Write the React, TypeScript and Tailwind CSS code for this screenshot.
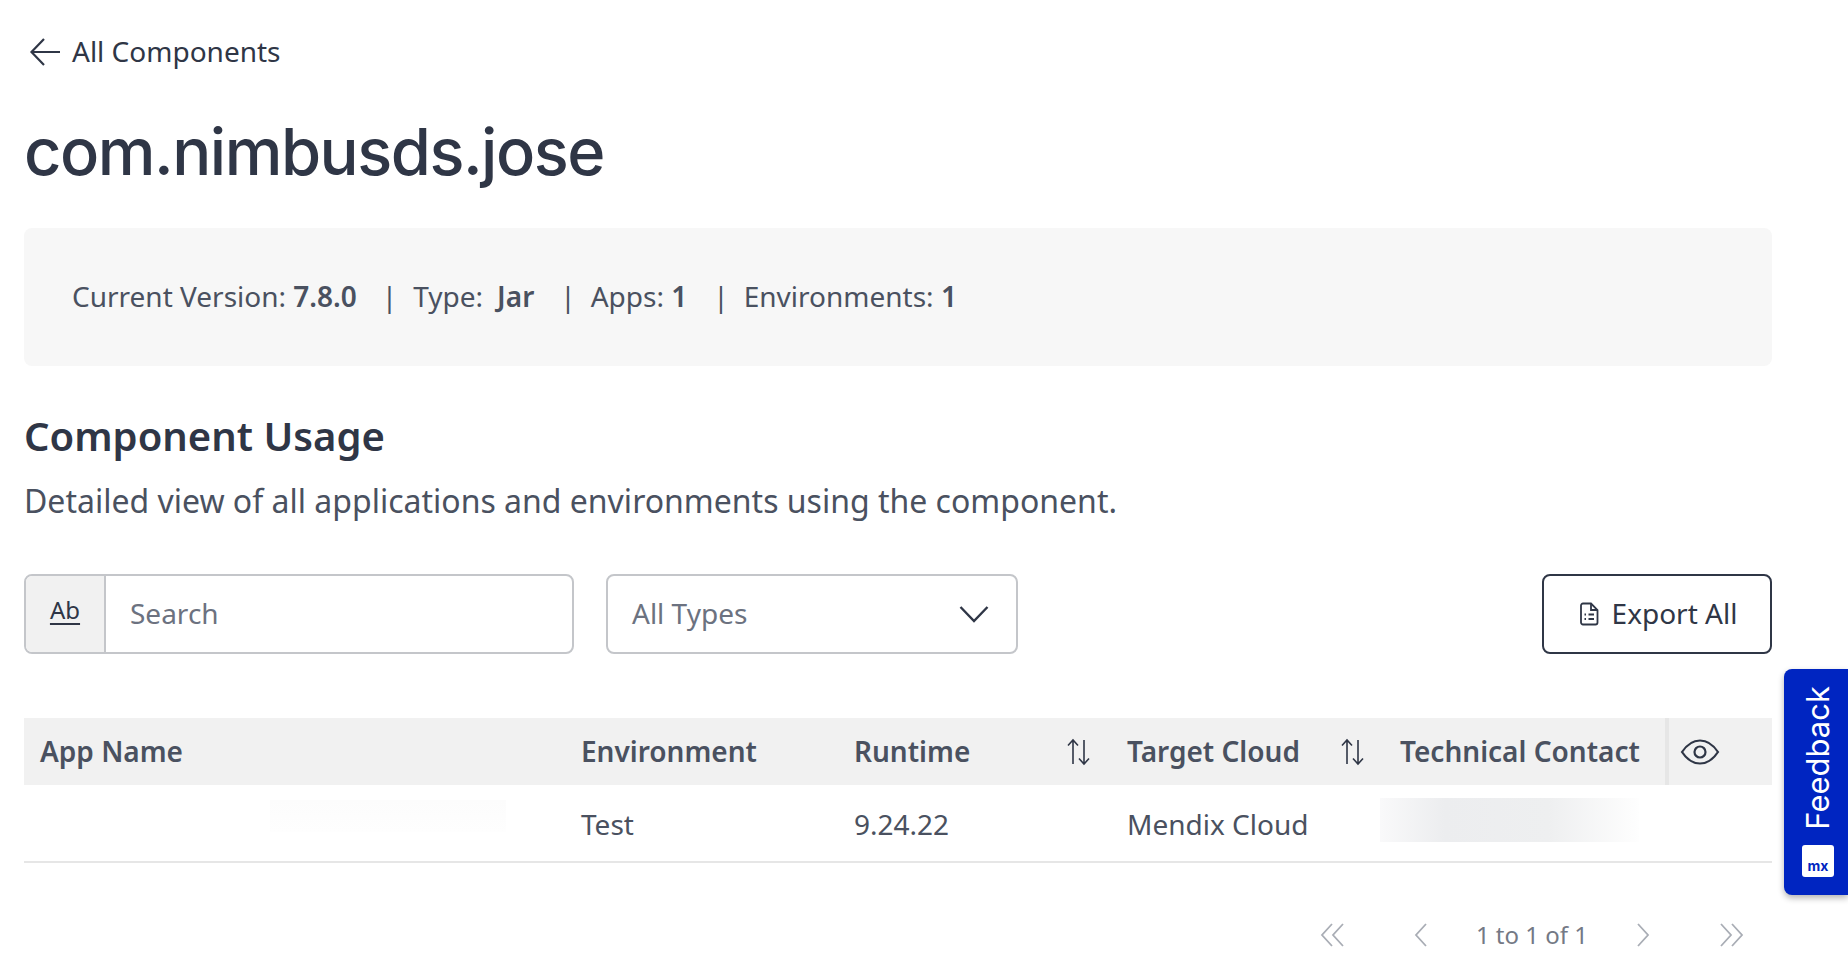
import React from "react";

const noto = { fontFamily: '"Noto Sans", sans-serif' };

function Sort() {
  return (
    <svg width="27" height="28" viewBox="0 0 27 28" fill="none" stroke="#2f3646" strokeWidth="1.600" className="shrink-0">
      <path d="M8 26V2M3 7.500L8 2l5 5.500" />
      <path d="M19 2v24M14 20.500L19 26l5-5.500" />
    </svg>
  );
}

function Pager({ d }: { d: string }) {
  return (
    <svg width="28" height="28" viewBox="0 0 28 28" fill="none" stroke="#a9adb5" strokeWidth="1.800" className="shrink-0">
      <path d={d} />
    </svg>
  );
}

export default function App() {
  return (
    <div className="relative h-[970px] w-[1848px] overflow-hidden bg-white px-6 text-[#4a5160]" style={noto}>
      <div className="flex h-[104px] items-center gap-[11px] pl-[5px] text-[#2f3646]">
        <svg width="32" height="32" viewBox="0 0 32 32" fill="none" stroke="#2f3646" strokeWidth="2.200">
          <path d="M31 16H3M15 3L2.500 16 15 29" />
        </svg>
        <span className="pb-[2px] text-[28px] leading-8">All Components</span>
      </div>

      <h1 className="h-[124px] pt-[12px] text-[65px] leading-[72px] tracking-[-1.5px] text-[#2f3646]" style={{ fontFamily: "Inter, sans-serif", fontWeight: 500 }}>
        com.nimbusds.jose
      </h1>

      <div className="flex h-[138px] w-[1748px] items-center rounded-lg bg-[#f7f7f7] pb-[3px] pl-12 text-[28px]">
        <span>Current Version: <b className="font-semibold">7.8.0</b></span>
        <span className="ml-[25px]">|</span>
        <span className="ml-[16px]">Type:</span>
        <b className="ml-[14px] font-semibold">Jar</b>
        <span className="ml-[26px]">|</span>
        <span className="ml-[15px]">Apps: <b className="font-semibold">1</b></span>
        <span className="ml-[26px]">|</span>
        <span className="ml-[15px]">Environments: <b className="font-semibold">1</b></span>
      </div>

      <h2 className="mt-[48px] h-[44px] text-[40px] leading-[44px] font-semibold text-[#2f3646]">Component Usage</h2>
      <p className="mt-[21px] h-[44px] text-[32px] leading-[44px]">Detailed view of all applications and environments using the component.</p>

      <div className="mt-[51px] flex h-[80px] w-[1748px] items-stretch">
        <div className="flex w-[550px] rounded-lg border-2 border-[#c4c6ca]">
          <div className="flex w-[80px] shrink-0 items-center justify-center rounded-l-md border-r-2 border-[#c4c6ca] bg-[#f1f1f1] pb-2 text-[24px] text-[#2f3646]">
            <span className="underline decoration-2 underline-offset-[4px]">Ab</span>
          </div>
          <div className="flex items-center pb-[2px] pl-[24px] text-[28px] text-[#6c7280]">Search</div>
        </div>
        <div className="ml-[32px] flex w-[412px] items-center justify-between rounded-lg border-2 border-[#c4c6ca] pl-[24px] pr-[27px] text-[28px] text-[#6c7280]">
          <span className="pb-[2px]">All Types</span>
          <svg width="30" height="18" viewBox="0 0 30 18" fill="none" stroke="#2f3646" strokeWidth="2.400">
            <path d="M1.500 2L15 16 28.500 2" />
          </svg>
        </div>
        <div className="ml-auto flex w-[230px] items-center justify-center gap-[13px] rounded-lg border-2 border-[#2f3646] pl-[2px] text-[28px] text-[#2f3646]">
          <svg width="20" height="24" viewBox="0 0 20 24" fill="none" stroke="#2f3646" strokeWidth="1.800">
            <path d="M2 3.500a2 2 0 0 1 2-2h8L18.500 8v12.500a2 2 0 0 1-2 2H4a2 2 0 0 1-2-2z" />
            <path d="M12 1.500V8h6.500M5.500 12.500h1.500M9.500 12.500h5.500M5.500 17h1.500M9.500 17h5.500" />
          </svg>
          <span className="pb-[2px]">Export All</span>
        </div>
      </div>

      <div className="mt-[64px] w-[1748px]">
        <div className="flex h-[67px] items-center bg-[#f1f1f1] text-[28px] font-semibold">
          <div className="w-[557px] shrink-0 pb-[2px] pl-4">App Name</div>
          <div className="w-[273px] shrink-0 pb-[2px]">Environment</div>
          <div className="flex w-[273px] shrink-0 items-center justify-between pr-[35px]">
            <span className="pb-[2px]">Runtime</span>
            <Sort />
          </div>
          <div className="flex w-[273px] shrink-0 items-center justify-between pr-[34px]">
            <span className="pb-[2px]">Target Cloud</span>
            <Sort />
          </div>
          <div className="flex h-full w-[269px] shrink-0 items-center border-r-[4px] border-[#e6e6e6] pb-[2px]">Technical Contact</div>
          <div className="flex flex-1 items-center pl-[11px]">
            <svg width="40" height="28" viewBox="0 0 40 28" fill="none" stroke="#2f3646" strokeWidth="2.200">
              <path d="M2 14C7 6.500 13 2.500 20 2.500S33 6.500 38 14c-5 7.500-11 11.500-18 11.500S7 21.500 2 14z" />
              <circle cx="20" cy="14" r="5.500" />
            </svg>
          </div>
        </div>
        <div className="flex h-[78px] items-center border-b-2 border-[#e6e6e6] pt-[2px] text-[28px]">
          <div className="w-[557px] shrink-0" />
          <div className="w-[273px] shrink-0">Test</div>
          <div className="w-[273px] shrink-0">9.24.22</div>
          <div className="w-[273px] shrink-0">Mendix Cloud</div>
        </div>
      </div>

      <div className="absolute left-[1380px] top-[798px] h-[44px] w-[259px] bg-[linear-gradient(to_right,#f9f9fa,#ecedef_25%,#eeeff0_65%,#fefefe)]" />
      <div className="absolute left-[270px] top-[800px] h-[32px] w-[236px] bg-[linear-gradient(to_bottom,#fcfcfc,#fefefe)]" />

      <div className="mt-[50px] flex h-[44px] w-[1748px] items-center text-[24px] text-[#747985]">
        <div className="ml-auto flex items-center pr-[27px]">
          <Pager d="M13 3L3 14l10 11M24 3L14 14l10 11" />
          <div className="ml-[60px]"><Pager d="M19 3L9 14l10 11" /></div>
          <span className="ml-[41px]">1 to 1 of 1</span>
          <div className="ml-[41px]"><Pager d="M9 3l10 11L9 25" /></div>
          <div className="ml-[60px]"><Pager d="M4 3l10 11L4 25M15 3l10 11-10 11" /></div>
        </div>
      </div>

      <div className="absolute left-[1784px] top-[669px] flex h-[226px] w-[64px] flex-col items-center justify-between rounded-l-lg bg-[#0025c1] pb-[18px] pl-[4px] pt-[17px] shadow-[0_3px_6px_rgba(0,0,0,0.3)]">
        <span className="text-[31px] leading-[40px] text-white" style={{ writingMode: "vertical-rl", transform: "rotate(180deg)", fontFamily: "Inter, sans-serif" }}>Feedback</span>
        <div className="flex h-[32px] w-[32px] items-end justify-center rounded-[3px] bg-white pb-[3px] text-[14px] leading-[16px] font-bold text-[#0025c1]" style={{ fontFamily: "Inter, sans-serif" }}>mx</div>
      </div>
    </div>
  );
}
